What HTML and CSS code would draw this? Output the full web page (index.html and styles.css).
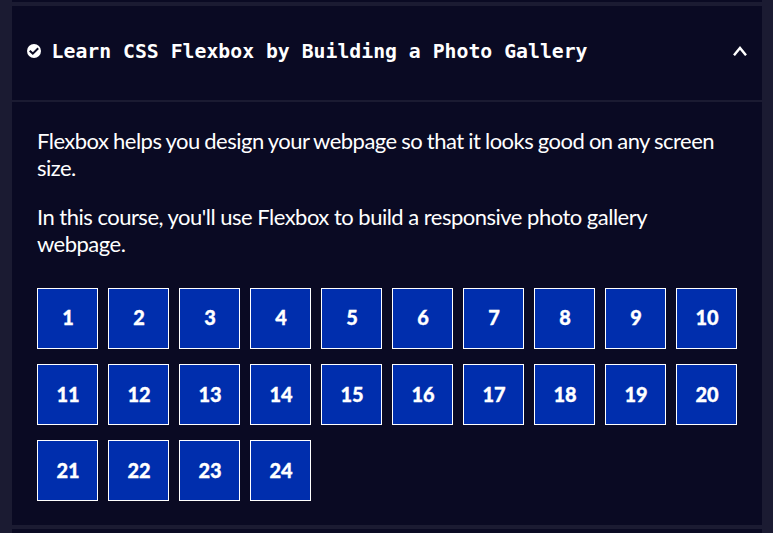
FILE: index.html
```html
<!DOCTYPE html>
<html lang="en">
<head>
<meta charset="utf-8">
<title>Learn CSS Flexbox</title>
<link rel="stylesheet" href="styles.css">
</head>
<body>
<main class="map">
<div class="block previous"></div>
<section class="block course">
<button class="header">
<svg class="check" viewBox="0 0 14 14"><circle cx="7" cy="7" r="7" fill="#fff"/><path d="M2.7 6.8 5.8 9.6l5.4-5.4" fill="none" stroke="#0a0a23" stroke-width="2"/></svg>
<span class="title">Learn CSS Flexbox by Building a Photo Gallery</span>
<svg class="chevron" viewBox="0 0 14 10"><path d="M1 9.3 7 2l6 7.3" fill="none" stroke="#fff" stroke-width="2.4"/></svg>
</button>
<div class="content">
<p class="intro">Flexbox helps you design your webpage so that it looks good on any screen size.</p>
<p>In this course, you'll use Flexbox to build a responsive photo gallery webpage.</p>
<div class="steps">
<a>1</a><a>2</a><a>3</a><a>4</a><a>5</a><a>6</a><a>7</a><a>8</a><a>9</a><a>10</a><a>11</a><a>12</a><a>13</a><a>14</a><a>15</a><a>16</a><a>17</a><a>18</a><a>19</a><a>20</a><a>21</a><a>22</a><a>23</a><a>24</a>
</div>
</div>
</section>
<div class="block next"></div>
</main>
</body>
</html>
```
FILE: styles.css
```css
* { box-sizing: border-box; }
body { margin: 0; height: 533px; overflow: hidden; background: #1b1b32; color: #fff; font-family: Lato, sans-serif; }
.map { width: 750px; margin-left: 12px; display: flex; flex-direction: column; gap: 4px; }
.block { background: #0a0a23; }
.previous { height: 2px; }
.next { height: 4px; }
.course { height: 519px; }
.header { width: 100%; height: 96px; display: flex; align-items: center; padding: 0 15px 4px; border: 0; border-bottom: 2px solid #1b1b32; background: transparent; color: #fff; text-align: left; }
.check { width: 14px; height: 14px; margin-right: 10.6px; }
.title { flex: 1; padding-top: 2px; font: bold 19.8px/28px "DejaVu Sans Mono", monospace; }
.chevron { width: 14px; height: 10px; }
.content { padding: 25px 24px 0 25px; }
p { margin: 0 0 22px; font-size: 22px; line-height: 27px; letter-spacing: -0.51px; }
.intro { letter-spacing: -0.52px; word-spacing: -0.5px; }
.steps { display: grid; grid-template-columns: repeat(10, 61px); column-gap: 10px; row-gap: 15px; padding-top: 9px; }
.steps a { height: 61px; display: flex; align-items: center; justify-content: center; padding: 0 0 2px 1px; border: 1px solid #fff; background: #002ead; font-size: 20px; font-weight: 900; -webkit-text-stroke: 0.3px #fff; }
.steps a:nth-child(-n+10) { padding-bottom: 4px; }
```
